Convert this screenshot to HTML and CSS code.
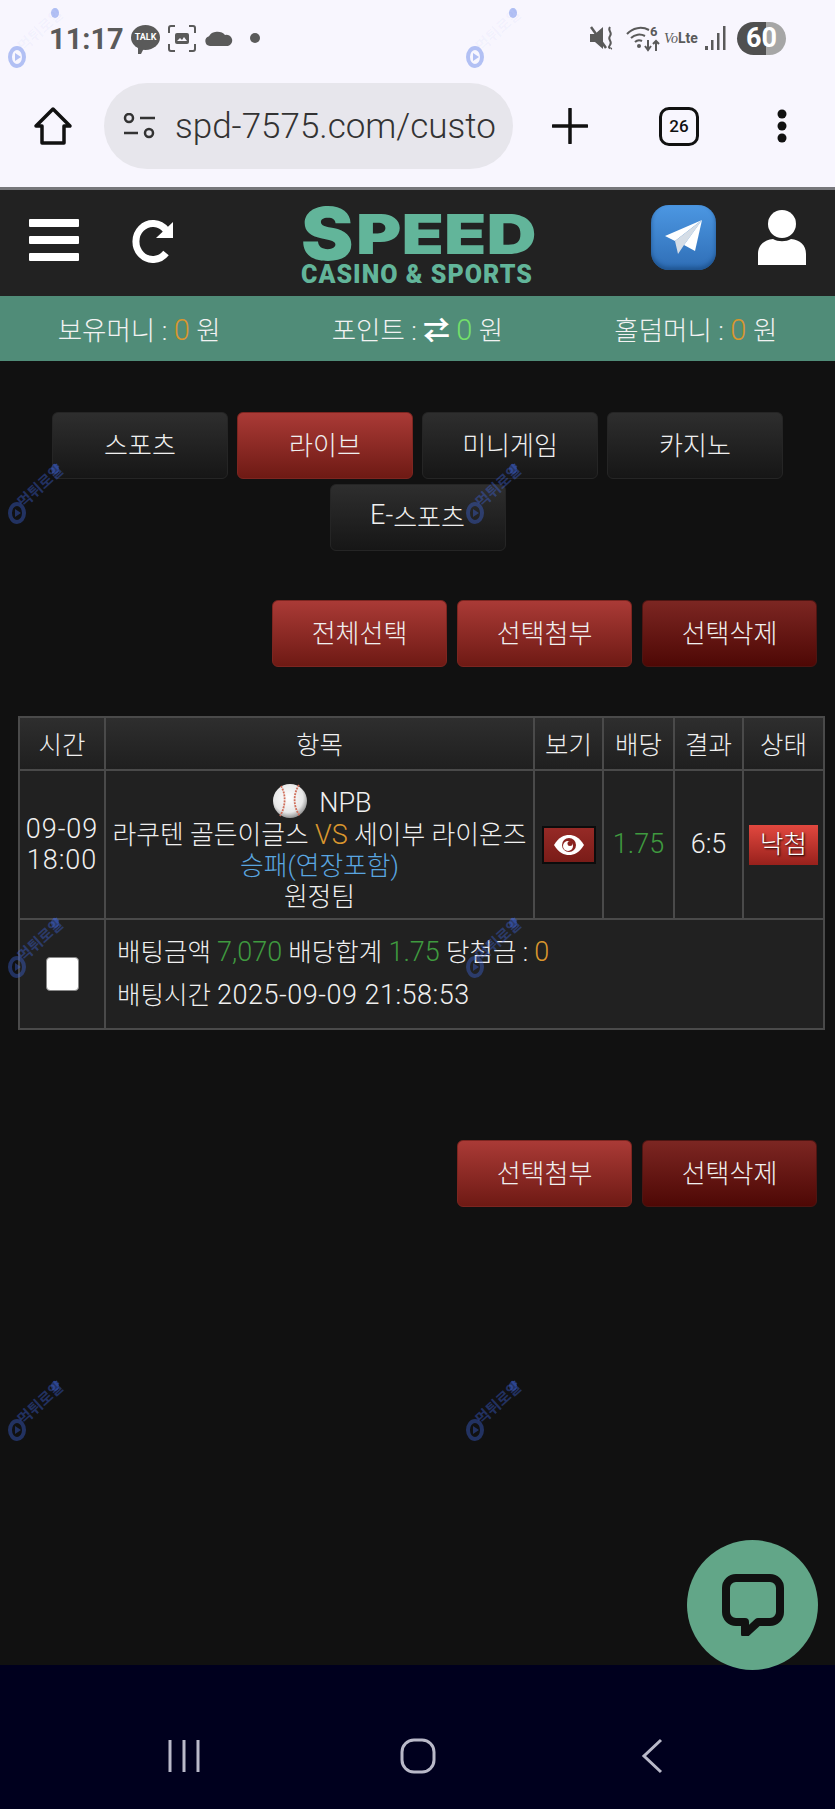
FILE: index.html
```html
<!DOCTYPE html>
<html lang="ko">
<head>
    <meta charset="UTF-8">
    <title>SPEED</title>
    <link rel="stylesheet" href="styles.css">
</head>
<body>
    <div class="phone-top">
        <div class="status-bar">
            <span class="clock">11:17</span>
            <span class="talk">TALK</span>
            <svg class="st-shot" width="28" height="27" viewBox="0 0 28 27"><path d="M1 8V3a2 2 0 0 1 2-2h4M21 1h4a2 2 0 0 1 2 2v5M27 19v5a2 2 0 0 1-2 2h-4M7 26H3a2 2 0 0 1-2-2v-5" fill="none" stroke="#5a5a5a" stroke-width="2"/><rect x="7" y="8" width="14" height="11" rx="2" fill="#5a5a5a"/><path d="M9 16l3-3 2 2 2-3 3 4z" fill="#f8f6fe"/></svg>
            <svg class="st-cloud" width="28" height="16" viewBox="0 0 28 16"><path d="M5 16a5 5 0 0 1-1-9.800A9 7 0 0 1 20 5a5.500 5.500 0 0 1 3 11z" fill="#5a5a5a"/></svg>
            <span class="st-dot"></span>
            <span class="st-right">
                <svg width="26" height="26" viewBox="0 0 26 26"><path d="M0 9h5l8-7v22l-8-7H0z" fill="#5a5a5a"/><path d="M1 2l15 21" stroke="#5a5a5a" stroke-width="2.500"/><path d="M20 2c-3 4 3 5 0 9s3 5 0 9 2 3 1 4" fill="none" stroke="#5a5a5a" stroke-width="2"/></svg>
                <svg class="st-wifi" width="34" height="28" viewBox="0 0 34 28"><path d="M1 10a18 18 0 0 1 22-4M5 14a12 12 0 0 1 14-2M9 18a6 6 0 0 1 7-1" fill="none" stroke="#5a5a5a" stroke-width="2"/><circle cx="13" cy="22" r="2" fill="#5a5a5a"/><text x="24" y="12" class="st-six">6</text><path d="M22 16v10M19 22l3 4 3-4M30 27V17M27 20l3-3 3 3" fill="none" stroke="#5a5a5a" stroke-width="2"/></svg>
                <span class="volte"><i>Vo</i>Lte</span>
                <svg class="st-signal" width="22" height="26" viewBox="0 0 22 26"><rect x="0" y="21" width="3" height="4" fill="#5a5a5a"/><rect x="6" y="15" width="2.500" height="10" fill="#5a5a5a"/><rect x="12" y="8" width="2.500" height="17" fill="#5a5a5a"/><rect x="18" y="1" width="2.500" height="24" fill="#5a5a5a"/></svg>
                <span class="battery">60</span>
            </span>
        </div>
        <div class="url-bar">
            <svg class="ic-home" width="40" height="40" viewBox="0 0 40 40"><path d="M20 3L37 20H31V37H9V20H3Z" fill="none" stroke="#111" stroke-width="3.500" stroke-linejoin="round"/></svg>
            <div class="url-pill">
                <svg width="34" height="26" viewBox="0 0 34 26"><circle cx="6" cy="5" r="4" fill="none" stroke="#333" stroke-width="2.500"/><path d="M17 5h15M1 20h14" stroke="#333" stroke-width="2.500"/><circle cx="26" cy="20" r="4" fill="none" stroke="#333" stroke-width="2.500"/></svg>
                <span class="url-text">spd-7575.com/custo</span>
            </div>
            <svg class="ic-plus" width="36" height="36" viewBox="0 0 36 36"><path d="M18 1v34M1 18h34" stroke="#111" stroke-width="3.500" stroke-linecap="round"/></svg>
            <span class="tabs">26</span>
            <svg class="ic-more" width="12" height="36" viewBox="0 0 12 36"><circle cx="6" cy="6" r="4.500" fill="#111"/><circle cx="6" cy="18" r="4.500" fill="#111"/><circle cx="6" cy="30" r="4.500" fill="#111"/></svg>
        </div>
    </div>

    <header class="site-head">
        <div class="burger"><span></span><span></span><span></span></div>
        <svg class="ic-refresh" width="46" height="44" viewBox="0 0 46 44"><path d="M36 11A17 18 0 1 0 36 34" fill="none" stroke="#fff" stroke-width="7"/><path d="M26 19L43 3V19Z" fill="#fff"/></svg>
        <div class="logo">
            <div class="logo-word"><span class="logo-s">S</span><span class="logo-rest">PEED</span></div>
            <div class="logo-sub">CASINO &amp; SPORTS</div>
        </div>
        <div class="tg">
            <svg width="40" height="36" viewBox="0 0 40 36"><path d="M38 1L1 17l10 5z" fill="#fff"/><path d="M38 1L11 22l3 13 6-9z" fill="#d5dde6"/><path d="M38 1L20 26l11 6z" fill="#fff"/></svg>
        </div>
        <svg class="ic-user" width="48" height="55" viewBox="0 0 48 55"><ellipse cx="24" cy="14" rx="14" ry="14" fill="#fff"/><path d="M0 55V44c0-9 6-14 15-15 5 3 13 3 18 0 9 1 15 6 15 15v11z" fill="#fff"/></svg>
    </header>

    <div class="money-bar">
        <div>보유머니 : <span class="num c-orange">0</span> 원</div>
        <div>포인트 : <span class="arrows">⇄</span> <span class="num c-lime">0</span> 원</div>
        <div>홀덤머니 : <span class="num c-orange">0</span> 원</div>
    </div>

    <main class="content">
        <nav class="tab-list">
            <a class="btn">스포츠</a>
            <a class="btn btn-red">라이브</a>
            <a class="btn">미니게임</a>
            <a class="btn">카지노</a>
            <a class="btn"><span class="num">E-</span>스포츠</a>
        </nav>

        <div class="actions actions-top">
            <a class="btn btn-red">전체선택</a>
            <a class="btn btn-red">선택첨부</a>
            <a class="btn btn-dark">선택삭제</a>
        </div>

        <table class="bet-table">
            <colgroup>
                <col class="col-time"><col class="col-item"><col class="col-view"><col class="col-odds"><col class="col-res"><col class="col-state">
            </colgroup>
            <thead>
                <tr><th>시간</th><th>항목</th><th>보기</th><th>배당</th><th>결과</th><th>상태</th></tr>
            </thead>
            <tbody>
                <tr class="row-game">
                    <td class="num date-short">09-09<br>18:00</td>
                    <td class="cell-item">
                        <div class="league">
                            <svg width="34" height="34" viewBox="0 0 34 34"><defs><radialGradient id="ball" cx="45%" cy="40%" r="62%"><stop offset="0" stop-color="#fff"/><stop offset=".7" stop-color="#e8e8e8"/><stop offset="1" stop-color="#8a8a8a"/></radialGradient></defs><circle cx="17" cy="17" r="17" fill="url(#ball)"/><path d="M8 2c5 8 5 20-1 30M26 1c-6 9-6 22 1 31" fill="none" stroke="#d0705c" stroke-width="1.800" stroke-dasharray="2 1"/></svg>
                            <span class="num league-name">NPB</span>
                        </div>
                        <div>라쿠텐 골든이글스 <span class="num c-orange">VS</span> 세이부 라이온즈</div>
                        <div class="c-blue">승패(연장포함)</div>
                        <div>원정팀</div>
                    </td>
                    <td>
                        <a class="eye-btn">
                            <svg width="32" height="22" viewBox="0 0 32 22"><path d="M1 11C6 3 11 1 16 1s10 2 15 10c-5 8-10 10-15 10S6 19 1 11z" fill="#fff"/><circle cx="16" cy="11" r="7" fill="#8a2320"/><circle cx="15" cy="12" r="5" fill="#fff"/><circle cx="17" cy="9.500" r="2.500" fill="#8a2320"/></svg>
                        </a>
                    </td>
                    <td class="num c-green">1.75</td>
                    <td class="num">6:5</td>
                    <td><span class="badge-lose">낙첨</span></td>
                </tr>
                <tr class="row-info">
                    <td><span class="check"></span></td>
                    <td colspan="5">
                        <div>배팅금액 <span class="num c-green">7,070</span> 배당합계 <span class="num c-green">1.75</span> 당첨금 : <span class="num c-orange">0</span></div>
                        <div>배팅시간 <span class="num date-long">2025-09-09 21:58:53</span></div>
                    </td>
                </tr>
            </tbody>
        </table>

        <div class="actions actions-bottom">
            <a class="btn btn-red">선택첨부</a>
            <a class="btn btn-dark">선택삭제</a>
        </div>
    </main>

    <footer class="nav-bar">
        <svg width="32" height="34" viewBox="0 0 32 34"><path d="M2 1v32M16 1v32M30 1v32" stroke="#b9b9c9" stroke-width="3"/></svg>
        <svg class="nav-home" width="36" height="36" viewBox="0 0 36 36"><rect x="2" y="2" width="32" height="32" rx="12" fill="none" stroke="#b9b9c9" stroke-width="3"/></svg>
        <svg class="nav-back" width="22" height="36" viewBox="0 0 22 36"><path d="M20 2L3 18l17 16" fill="none" stroke="#b9b9c9" stroke-width="3"/></svg>
    </footer>

    <a class="chat-fab">
        <svg width="62" height="62" viewBox="0 0 62 62"><path d="M14 4H48A10 10 0 0 1 58 14V38A10 10 0 0 1 48 48H36L23 60V48H14A10 10 0 0 1 4 38V14A10 10 0 0 1 14 4Z" fill="none" stroke="#111" stroke-width="8" stroke-linejoin="round"/></svg>
    </a>

    <div class="wm wm-pale wm-l wm-1"><i class="wm-tip"></i><b>먹튀로얄</b><i class="wm-logo"></i></div>
    <div class="wm wm-pale wm-r wm-1"><i class="wm-tip"></i><b>먹튀로얄</b><i class="wm-logo"></i></div>
    <div class="wm wm-l wm-2"><i class="wm-tip"></i><b>먹튀로얄</b><i class="wm-logo"></i></div>
    <div class="wm wm-r wm-2"><i class="wm-tip"></i><b>먹튀로얄</b><i class="wm-logo"></i></div>
    <div class="wm wm-l wm-3"><i class="wm-tip"></i><b>먹튀로얄</b><i class="wm-logo"></i></div>
    <div class="wm wm-r wm-3"><i class="wm-tip"></i><b>먹튀로얄</b><i class="wm-logo"></i></div>
    <div class="wm wm-l wm-4"><i class="wm-tip"></i><b>먹튀로얄</b><i class="wm-logo"></i></div>
    <div class="wm wm-r wm-4"><i class="wm-tip"></i><b>먹튀로얄</b><i class="wm-logo"></i></div>
</body>
</html>
```

FILE: styles.css
```css
html, body {
    margin: 0;
    padding: 0;
}

body {
    position: relative;
    display: flex;
    flex-direction: column;
    width: 835px;
    height: 1809px;
    overflow: hidden;
    background: #111;
    color: #f0f0f0;
    font-family: Roboto, "Noto Sans CJK KR", sans-serif;
    font-weight: 300;
    font-size: 25.5px;
}

a {
    color: inherit;
    text-decoration: none;
}

/* latin and digits sit larger than the hangul in the original */
.num { font-size: 27px; }

.c-orange { color: #d9962e; }
.c-lime { color: #74e06a; }
.c-green { color: #3f9a3f; }
.c-blue { color: #5aa6e0; }

/* phone chrome */
.phone-top {
    background: #f8f6fe;
    border-bottom: 3px solid #77777b;
}

.status-bar {
    display: flex;
    align-items: center;
    height: 76px;
    padding-left: 49px;
    color: #5a5a5a;
}

.clock {
    width: 70px;
    margin-top: 2px;
    font-size: 29px;
    font-weight: 700;
}

.talk {
    position: relative;
    display: flex;
    align-items: center;
    justify-content: center;
    width: 29px;
    height: 25px;
    margin: -2px 0 0 12px;
    border-radius: 50%;
    background: #5a5a5a;
    color: #fff;
    font-size: 9px;
    font-weight: 700;
}

.talk::after {
    content: "";
    position: absolute;
    left: 7px;
    bottom: -4px;
    border-left: 3px solid #5a5a5a;
    border-right: 3px solid transparent;
    border-top: 6px solid #5a5a5a;
}

.st-shot { margin-left: 8px; }
.st-cloud { margin-left: 9px; }

.st-dot {
    width: 10px;
    height: 10px;
    margin-left: 17px;
    border-radius: 50%;
    background: #5a5a5a;
}

.st-right {
    display: flex;
    align-items: center;
    margin-left: 330px;
}

.st-wifi { margin-left: 10px; }

.st-six {
    font: 700 13px Roboto, sans-serif;
    fill: #5a5a5a;
}

.volte {
    width: 36px;
    margin-left: 4px;
    font-size: 14px;
    font-weight: 700;
    white-space: nowrap;
}

.volte i {
    font-family: "Liberation Serif", serif;
    font-weight: 400;
}

.st-signal { margin-left: 5px; }

.battery {
    width: 49px;
    height: 33px;
    margin-left: 10px;
    border-radius: 17px;
    background: linear-gradient(90deg, #505050 60%, #a6a6a6 60%);
    color: #fff;
    font-size: 27px;
    font-weight: 700;
    line-height: 33px;
    text-align: center;
}

.url-bar {
    display: flex;
    align-items: center;
    height: 100px;
    padding: 0 0 11px 33px;
}

.url-pill {
    display: flex;
    align-items: center;
    gap: 18px;
    width: 409px;
    height: 86px;
    margin-left: 31px;
    padding-left: 19px;
    box-sizing: border-box;
    border-radius: 43px;
    background: #e7e6ec;
    color: #333;
}

.url-text {
    font-size: 35px;
    font-weight: 300;
    white-space: nowrap;
}

.ic-plus { margin-left: 39px; }

.tabs {
    width: 40px;
    height: 39px;
    margin-left: 71px;
    box-sizing: border-box;
    border: 3.5px solid #111;
    border-radius: 10px;
    color: #111;
    font-size: 17px;
    font-weight: 500;
    line-height: 32px;
    text-align: center;
}

.ic-more { margin-left: 77px; }

/* site header */
.site-head {
    display: flex;
    align-items: center;
    height: 106px;
    padding: 0 0 12px 29px;
    box-sizing: border-box;
    background: #222;
}

.burger {
    display: flex;
    flex-direction: column;
    gap: 9px;
    width: 50px;
    margin-top: 6px;
}

.burger span {
    height: 8px;
    border-radius: 1px;
    background: #fff;
}

.ic-refresh {
    margin: 8px 0 0 51px;
}

.logo {
    width: 234px;
    margin: 18px 0 0 125px;
    color: #62b59a;
}

.logo-word {
    display: flex;
    align-items: center;
    height: 56px;
    font-family: Inter, sans-serif;
    font-weight: 900;
}

.logo-s {
    width: 55px;
    font-size: 73px;
    line-height: 56px;
    transform: scaleX(1.08);
    transform-origin: left center;
}

.logo-rest {
    font-size: 55px;
    line-height: 56px;
    transform: scaleX(1.26);
    transform-origin: left center;
}

.logo-sub {
    height: 22px;
    margin-top: 2px;
    font-size: 25px;
    font-weight: 900;
    letter-spacing: 1px;
    line-height: 22px;
    white-space: nowrap;
}

.tg {
    display: flex;
    align-items: center;
    justify-content: center;
    width: 65px;
    height: 65px;
    margin-left: 116px;
    border-radius: 18px;
    background: linear-gradient(#4c97e2, #2f6eb6);
    box-shadow: inset 0 -3px 4px #1f5490;
}

.ic-user { margin-left: 42px; }

.money-bar {
    display: grid;
    grid-template-columns: repeat(3, 1fr);
    align-items: center;
    height: 65px;
    background: #508c78;
    color: #f2f2f2;
    font-size: 26.5px;
    text-align: center;
}

.money-bar .num { font-size: 29px; }

.arrows {
    color: #fff;
    font-weight: 700;
}

/* content */
.content {
    flex: 1;
    padding-top: 51px;
}

.btn {
    display: flex;
    align-items: center;
    justify-content: center;
    width: 176px;
    height: 67px;
    box-sizing: border-box;
    border: 1px solid #252525;
    border-radius: 6px;
    background: linear-gradient(#2e2e2e, #161616);
    padding-bottom: 5px;
    font-size: 26px;
}

.btn-red {
    border-color: #7d2520;
    background: linear-gradient(#aa3a36, #6e1a14);
}

.btn-dark {
    border-color: #4e1512;
    background: linear-gradient(#7c2622, #4e0805);
}

.tab-list {
    display: flex;
    flex-wrap: wrap;
    justify-content: center;
    gap: 5px 9px;
    width: 731px;
    margin: 0 auto;
}

.actions {
    display: flex;
    justify-content: flex-end;
    gap: 10px;
    padding-right: 18px;
}

.actions .btn { width: 175px; }

.actions-top { margin-top: 49px; }
.actions-bottom { margin-top: 110px; }

.bet-table {
    width: 807px;
    margin: 49px 0 0 18px;
    table-layout: fixed;
    border-collapse: collapse;
    background: #212121;
    text-align: center;
}

.bet-table th,
.bet-table td {
    padding: 0;
    border: 2px solid #4a4a4a;
    font-weight: 300;
}

.bet-table th {
    height: 49px;
    padding-bottom: 2px;
    background: linear-gradient(#2e2e2e, #1f1f1f);
}

.col-time { width: 86px; }
.col-view { width: 69px; }
.col-odds { width: 71px; }
.col-res { width: 69px; }
.col-state { width: 81px; }

.row-game td {
    height: 147px;
    line-height: 31px;
}

.bet-table .cell-item {
    padding-top: 8px;
    box-sizing: border-box;
    font-size: 25.8px;
}

.date-short { letter-spacing: 1px; }
.date-long { letter-spacing: .5px; }

.league {
    display: flex;
    align-items: center;
    justify-content: center;
    gap: 12px;
    height: 34px;
    margin-bottom: 2px;
    padding-left: 6px;
}

.league-name { padding-top: 4px; }

.eye-btn {
    display: inline-flex;
    align-items: center;
    justify-content: center;
    width: 54px;
    height: 38px;
    box-sizing: border-box;
    border: 2px solid #0c0c0c;
    background: linear-gradient(#962a26, #7a1c18);
    vertical-align: middle;
}

.badge-lose {
    display: inline-block;
    width: 69px;
    height: 40px;
    background: linear-gradient(#e2483f, #98211c);
    color: #fff;
    line-height: 38px;
    text-shadow: 1px 1px 2px #000;
    vertical-align: middle;
}

.row-info td {
    height: 108px;
}

.row-info td:last-child {
    padding-left: 11px;
    line-height: 43px;
    text-align: left;
}

.check {
    display: block;
    width: 33px;
    height: 34px;
    margin: 0 auto;
    box-sizing: border-box;
    border: 1px solid #888;
    border-radius: 4px;
    background: #fff;
}

/* android nav */
.nav-bar {
    display: flex;
    align-items: center;
    height: 144px;
    padding: 38px 0 0 168px;
    box-sizing: border-box;
    background: #00001e;
}

.nav-home { margin-left: 200px; }
.nav-back { margin-left: 205px; }

.chat-fab {
    position: absolute;
    top: 1540px;
    left: 687px;
    display: flex;
    align-items: center;
    justify-content: center;
    width: 131px;
    height: 130px;
    border-radius: 50%;
    background: #62a688;
}

/* site watermark */
.wm {
    position: absolute;
    width: 64px;
    height: 60px;
    color: rgba(64, 104, 230, .38);
    pointer-events: none;
}

.wm b {
    position: absolute;
    left: 5px;
    top: 13px;
    font-size: 15px;
    font-weight: 700;
    line-height: 18px;
    white-space: nowrap;
    transform: rotate(-42deg);
}

.wm-logo {
    position: absolute;
    left: 0;
    bottom: 0;
    width: 10px;
    height: 14px;
    border: 4px solid currentColor;
    border-radius: 50%;
}

.wm-logo::after {
    content: "";
    position: absolute;
    left: 3px;
    top: 3px;
    border-left: 6px solid currentColor;
    border-top: 4px solid transparent;
    border-bottom: 4px solid transparent;
}

.wm-tip {
    position: absolute;
    left: 43px;
    top: 0;
    width: 8px;
    height: 10px;
    border-radius: 50%;
    background: currentColor;
}

.wm-pale b { color: rgba(64, 104, 230, .04); }

.wm-l { left: 8px; }
.wm-r { left: 466px; }
.wm-1 { top: 8px; }
.wm-2 { top: 464px; }
.wm-3 { top: 918px; }
.wm-4 { top: 1381px; }
```
